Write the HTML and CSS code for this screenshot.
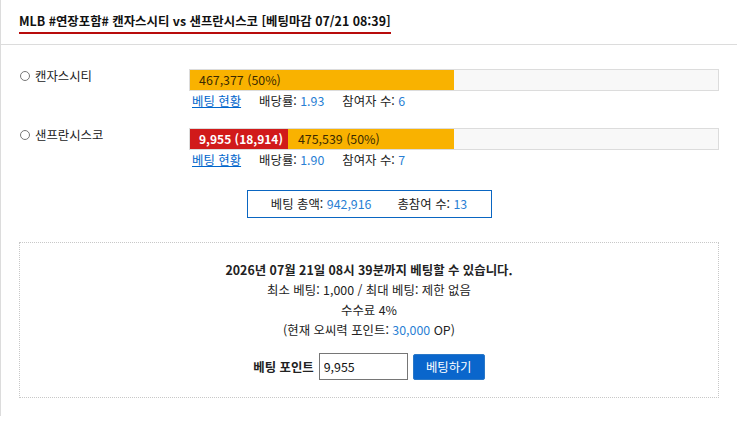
FILE: index.html
```html
<!DOCTYPE html>
<html lang="ko">
<head>
<meta charset="utf-8">
<link rel="stylesheet" href="styles.css">
</head>
<body>
<div class="card">
  <div class="head">
    <h1 class="title">MLB #연장포함# 캔자스시티 vs 샌프란시스코 [베팅마감 07/21 08:39]</h1>
  </div>
  <div class="body">
    <div class="team">
      <label class="team-name"><span class="radio"></span>캔자스시티</label>
      <div class="team-data">
        <div class="bar">
          <div class="fill" style="width:50%"><span class="amt">467,377 (50%)</span></div>
        </div>
        <div class="stats">
          <a class="link" href="#">베팅 현황</a>
          <span class="stat">배당률: <b class="num">1.93</b></span>
          <span class="stat">참여자 수: <b class="num">6</b></span>
        </div>
      </div>
    </div>
    <div class="team">
      <label class="team-name"><span class="radio"></span>샌프란시스코</label>
      <div class="team-data">
        <div class="bar">
          <div class="fill" style="width:50%"><span class="mine">9,955 (18,914)</span><span class="amt">475,539 (50%)</span></div>
        </div>
        <div class="stats">
          <a class="link" href="#">베팅 현황</a>
          <span class="stat">배당률: <b class="num">1.90</b></span>
          <span class="stat">참여자 수: <b class="num">7</b></span>
        </div>
      </div>
    </div>
    <div class="total-wrap">
      <div class="total">
        <span>베팅 총액: <b class="num">942,916</b></span>
        <span>총참여 수: <b class="num">13</b></span>
      </div>
    </div>
    <div class="betbox">
      <p class="deadline">2026년 07월 21일 08시 39분까지 베팅할 수 있습니다.</p>
      <p class="line">최소 베팅: 1,000 / 최대 베팅: 제한 없음</p>
      <p class="line">수수료 4%</p>
      <p class="line">(현재 오씨력 포인트: <b class="num">30,000</b> OP)</p>
      <form class="betform">
        <label class="bet-label" for="pt">베팅 포인트</label>
        <input class="bet-input" id="pt" type="text" value="9,955">
        <button class="bet-btn" type="button">베팅하기</button>
      </form>
    </div>
  </div>
</div>
</body>
</html>
```
FILE: styles.css
```css
* { box-sizing: border-box; }
html, body { margin: 0; padding: 0; background: #fff; }
body {
  font-family: "Noto Sans CJK KR", "Noto Sans", sans-serif;
  font-size: 12.4px;
  color: #222;
  width: 737px;
}
.card {
  background: #fff;
  border-left: 1px solid #dcdcdc;
  box-shadow: 0 2px 3px rgba(0,0,0,0.12);
  padding-bottom: 18px;
}
.head {
  padding: 12px 18px 10px 18px;
  border-bottom: 1px solid #dcdcdc;
}
.title {
  display: inline-block;
  margin: 0;
  font-size: 12.4px;
  font-weight: bold;
  line-height: 16px;
  padding-bottom: 3px;
  border-bottom: 2px solid #b80c0c;
  color: #111;
}
.body {
  padding: 24px 18px 0 18px;
}
.team {
  display: grid;
  grid-template-columns: 170px 1fr;
  margin-bottom: 17px;
}
.team-name {
  display: flex;
  align-items: center;
  height: 14px;
  padding-left: 1px;
  line-height: 14px;
}
.radio {
  width: 10px;
  height: 10px;
  border: 1px solid #777;
  border-radius: 50%;
  margin-right: 5px;
  background: #fff;
}
.bar {
  height: 22px;
  border: 1px solid #dcdcdc;
  background: #f8f8f8;
  display: flex;
}
.fill {
  display: flex;
  background: #f9b200;
  height: 100%;
}
.amt, .mine {
  line-height: 20px;
  padding: 0 9px;
  white-space: nowrap;
}
.amt { color: #3a2a00; }
.mine {
  background: #d11a1a;
  color: #fff;
  font-weight: bold;
  font-size: 12px;
  padding: 0 5px 0 9px;
}
.mine + .amt { padding-left: 10px; }
.stats {
  display: flex;
  padding-left: 3px;
  line-height: 20px;
  gap: 18px;
}
.link { color: #0066cc; text-decoration: underline; }
.num { font-weight: normal; color: #2a7fd4; }
.total-wrap {
  display: flex;
  justify-content: center;
  padding-top: 3px;
}
.total {
  width: 245px;
  height: 28px;
  border: 1px solid #0a66c2;
  display: flex;
  align-items: center;
  justify-content: center;
  gap: 26px;
}
.betbox {
  margin-top: 24px;
  border: 1px dotted #c8c8c8;
  padding: 17px 0 17px 0;
  text-align: center;
}
.betbox p { margin: 0; line-height: 20px; }
.deadline { font-weight: bold; }
.betform {
  margin-top: 13px;
  display: flex;
  justify-content: center;
  align-items: center;
  gap: 5px;
}
.bet-label { font-weight: bold; }
.bet-input {
  width: 89px;
  height: 27px;
  border: 1px solid #767676;
  padding: 0 4px;
  font: inherit;
  color: #111;
}
.bet-btn {
  width: 72px;
  height: 26px;
  background: #0a66cc;
  border: 1px solid #2a78c8;
  border-radius: 2px;
  color: #fff;
  font: inherit;
  padding: 0;
}
```
